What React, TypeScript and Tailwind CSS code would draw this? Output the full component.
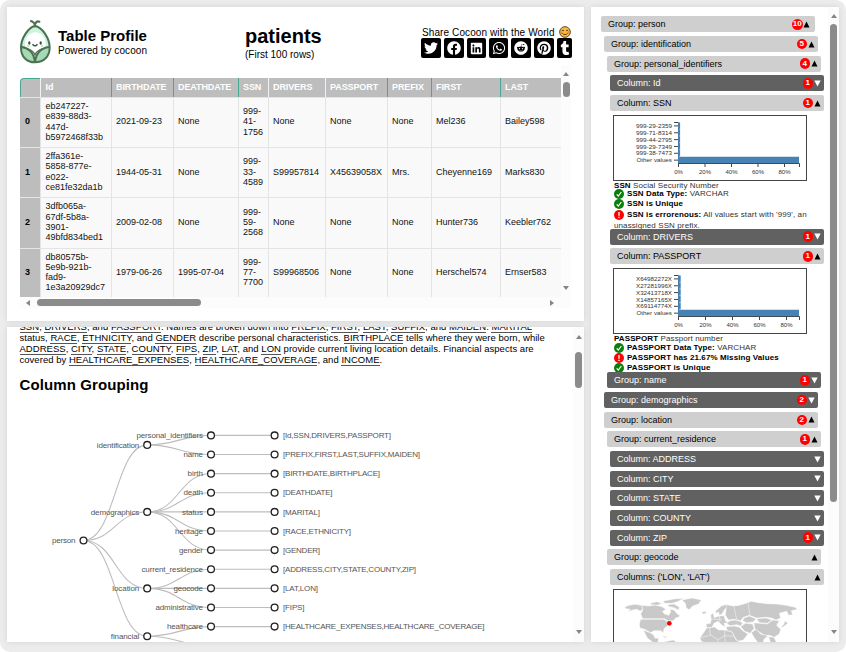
import React from "react";
import { FaTwitter, FaFacebook, FaLinkedin, FaWhatsapp, FaReddit, FaPinterest, FaTumblr } from "react-icons/fa";

function Arrow({ dir }: { dir: "up" | "down" | "left" | "right" }) {
  const d = { up: "M0 4L3 0L6 4Z", down: "M0 0L3 4L6 0Z", left: "M4 0L0 3L4 6Z", right: "M0 0L4 3L0 6Z" }[dir];
  const flat = dir === "up" || dir === "down";
  return (
    <svg width={flat ? 6 : 4} height={flat ? 4 : 6} className="shrink-0">
      <path d={d} fill="#858585" />
    </svg>
  );
}

function Logo() {
  const egg = "M45 21C26 24 3 57 3 86C3 112 19 130 45 130C71 130 89 112 89 86C89 57 66 24 45 21Z";
  return (
    <svg width="32" height="46" viewBox="0 0 96 138" className="shrink-0">
      <defs>
        <clipPath id="egg">
          <path d={egg} />
        </clipPath>
      </defs>
      <path d={egg} fill="#cdf3dc" />
      <ellipse cx="46" cy="76" rx="31" ry="36" fill="#fff" />
      <g clipPath="url(#egg)" stroke="#4e7052" strokeWidth="6" fill="#a4dab6">
        <path d="M-4 84C20 82 44 98 45 134H-4Z" />
        <path d="M96 84C70 82 46 98 45 134H96Z" />
        <path d="M22 89C32 92 42 100 45 108C48 100 58 92 68 89" fill="none" strokeWidth="4" />
      </g>
      <path d={egg} fill="none" stroke="#4e7052" strokeWidth="6" />
      <path d="M45 22C45 14 42 9 33 6M45 16C48 9 52 5 58 8" fill="none" stroke="#4e7052" strokeWidth="6.5" strokeLinecap="round" />
      <ellipse cx="28" cy="72" rx="3.5" ry="5" fill="#35513b" />
      <ellipse cx="62" cy="72" rx="3.5" ry="5" fill="#35513b" />
      <path d="M39 77Q45 84 51 77" fill="none" stroke="#35513b" strokeWidth="4.5" strokeLinecap="round" />
      <circle cx="25" cy="81" r="3.5" fill="#b5e8b0" />
      <circle cx="66" cy="81" r="3.5" fill="#b5e8b0" />
    </svg>
  );
}

function Smile() {
  return (
    <svg width="12" height="12" viewBox="0 0 36 36">
      <circle cx="18" cy="18" r="16" fill="#fdb93a" stroke="#5a4630" strokeWidth="3" />
      <path d="M8 15Q12 10 15 15M21 15Q24 10 28 15M9 21Q18 31 27 21" fill="none" stroke="#3b3026" strokeWidth="2.6" />
      <circle cx="8" cy="21" r="3" fill="#f8893c" />
      <circle cx="28" cy="21" r="3" fill="#f8893c" />
    </svg>
  );
}

const headers = ["", "Id", "BIRTHDATE", "DEATHDATE", "SSN", "DRIVERS", "PASSPORT", "PREFIX", "FIRST", "LAST"];
const tealEdge = [true, false, true, true, true, false, false, true, true, true];
const rows = [
  ["0", "eb247227-\ne839-88d3-\n447d-\nb5972468f33b", "2021-09-23", "None", "999-\n41-\n1756", "None", "None", "None", "Mel236", "Bailey598"],
  ["1", "2ffa361e-\n5858-877e-\ne022-\nce81fe32da1b", "1944-05-31", "None", "999-\n33-\n4589", "S99957814", "X45639058X", "Mrs.", "Cheyenne169", "Marks830"],
  ["2", "3dfb065a-\n67df-5b8a-\n3901-\n49bfd834bed1", "2009-02-08", "None", "999-\n59-\n2568", "None", "None", "None", "Hunter736", "Keebler762"],
  ["3", "db80575b-\n5e9b-921b-\nfad9-\n1e3a20929dc7", "1979-06-26", "1995-07-04", "999-\n77-\n7700", "S99968506", "None", "None", "Herschel574", "Ernser583"],
];
const colGrid = "grid grid-cols-[20px_70.5px_62px_65px_30px_57px_62px_44px_69px_61.5px]";

function DataTable() {
  return (
    <div className="flex h-[243px] w-[551px] flex-col">
      <div className="flex h-[232px]">
        <div className="w-[541px] overflow-hidden pt-[13px]">
          <div className={colGrid + " h-[19px] overflow-hidden rounded-tl-[4px] bg-[#bdbdbd]"}>
            {headers.map((h, i) => (
              <div
                key={i}
                className={
                  "flex items-center border-l pl-[4.5px] text-[9px] font-bold tracking-[-0.1px] text-white " +
                  (i === 0 ? "rounded-tl-[4px] border-t border-[#46a793]" : tealEdge[i] ? "border-[#46a793]" : "border-[#f2f2f2]")
                }
              >
                {h}
              </div>
            ))}
          </div>
          {rows.map((r) => (
            <div key={r[0]} className={colGrid + " h-[50.2px] border-t border-[#e4e4e4] bg-[#f9f9f9]"}>
              {r.map((c, i) =>
                i === 0 ? (
                  <div key={i} className="flex items-center bg-[#bdbdbd] pb-[1px] pl-[5px] text-[9px] font-bold">
                    {c}
                  </div>
                ) : (
                  <div
                    key={i}
                    className="flex items-center whitespace-pre border-l border-[#e4e4e4] pb-[2px] pl-[4.5px] text-[9px] leading-[10.3px] text-[#111]"
                  >
                    {c}
                  </div>
                )
              )}
            </div>
          ))}
        </div>
        <div className="flex w-[10px] flex-col items-center bg-[#fcfcfc] pb-[7px] pt-[7px]">
          <Arrow dir="up" />
          <div className="mt-[6px] h-[15px] w-[7px] rounded-full bg-[#8b8b8b]" />
          <div className="flex-1" />
          <Arrow dir="down" />
        </div>
      </div>
      <div className="flex h-[11px] items-center bg-[#fcfcfc] pl-[6px] pr-[17px]">
        <Arrow dir="left" />
        <div className="ml-[7px] h-[7px] w-[164px] rounded-full bg-[#8b8b8b]" />
        <div className="flex-1" />
        <Arrow dir="right" />
      </div>
    </div>
  );
}

const socials = [
  { I: FaTwitter, w: "w-[20px]", s: 14 },
  { I: FaFacebook, w: "w-[20px]", s: 14 },
  { I: FaLinkedin, w: "w-[19px]", s: 13 },
  { I: FaWhatsapp, w: "w-[19px]", s: 14 },
  { I: FaReddit, w: "w-[20px]", s: 14 },
  { I: FaPinterest, w: "w-[20px]", s: 14 },
  { I: FaTumblr, w: "w-[15px]", s: 14 },
];

function TopPanel() {
  return (
    <section className="h-[314px] bg-white pl-[13px] shadow-[0_0_6px_rgba(0,0,0,0.1)]">
      <div className="flex h-[58px] items-start">
        <div className="mt-[12px]">
          <Logo />
        </div>
        <div className="ml-[6px] mt-[20px] w-[187px]">
          <div className="text-[15px] font-bold leading-[18px]">Table Profile</div>
          <div className="text-[10px] leading-[12px] tracking-[0.07px]">Powered by cocoon</div>
        </div>
        <div className="mt-[17px] w-[176px]">
          <div className="text-[20px] font-bold leading-[25px]">patients</div>
          <div className="text-[10px] leading-[12px]">(First 100 rows)</div>
        </div>
        <div className="mt-[19px] w-[151px]">
          <div className="flex h-[12px] items-center gap-[4px] pl-[1px] text-[10px] tracking-[0.1px]">
            <span className="whitespace-nowrap">Share Cocoon with the World</span>
            <Smile />
          </div>
          <div className="flex justify-between">
            {socials.map(({ I, w, s }, i) => (
              <div key={i} className={w + " flex h-[20px] items-center justify-center rounded-[2px] bg-black text-white"}>
                <I size={s} />
              </div>
            ))}
          </div>
        </div>
      </div>
      <DataTable />
    </section>
  );
}

const nodeRows = [
  ["personal_identifiers", "[Id,SSN,DRIVERS,PASSPORT]", 66.5, 108],
  ["name", "[PREFIX,FIRST,LAST,SUFFIX,MAIDEN]", 19.5, 137],
  ["birth", "[BIRTHDATE,BIRTHPLACE]", 15.5, 97],
  ["death", "[DEATHDATE]", 19.5, 49.5],
  ["status", "[MARITAL]", 21, 37],
  ["heritage", "[RACE,ETHNICITY]", 28, 68],
  ["gender", "[GENDER]", 24, 37],
  ["current_residence", "[ADDRESS,CITY,STATE,COUNTY,ZIP]", 61.5, 133],
  ["geocode", "[LAT,LON]", 29.5, 35],
  ["administrative", "[FIPS]", 47.5, 21.5],
  ["healthcare", "[HEALTHCARE_EXPENSES,HEALTHCARE_COVERAGE]", 36, 201.5],
] as [string, string, number, number][];
const rowY = (i: number) => 435.4 + 19.12 * i;
const parents = [
  { n: "identification", y: 444.9, c: [0, 1], w: 42.5 },
  { n: "demographics", y: 511.9, c: [2, 3, 4, 5, 6], w: 48.5 },
  { n: "location", y: 588.4, c: [7, 8, 9], w: 27 },
  { n: "financial", y: 636.2, c: [10, 11], w: 28.5 },
];
const link = (x1: number, y1: number, x2: number, y2: number) =>
  `M${x1} ${y1}C${(x1 + x2) / 2} ${y1} ${(x1 + x2) / 2} ${y2} ${x2} ${y2}`;

function Tree() {
  return (
    <svg width="566" height="240" viewBox="7 402 566 240" className="block" fontSize="8" fill="#555">
      <g fill="none" stroke="#bdbdbd" strokeWidth="1.1">
        {parents.map((p) => (
          <path key={p.n} d={link(83.5, 540.5, 147.2, p.y)} />
        ))}
        {parents.flatMap((p) => p.c.map((c) => <path key={p.n + c} d={link(147.2, p.y, 211, rowY(c))} />))}
        {nodeRows.map((r, i) => (
          <path key={r[0]} d={`M211 ${rowY(i)}H274.6`} />
        ))}
      </g>
      <g fill="#fff" stroke="#222" strokeWidth="1.3">
        <circle cx="83.5" cy="540.5" r="3.4" />
        {parents.map((p) => (
          <circle key={p.n} cx="147.2" cy={p.y} r="3.4" />
        ))}
        {nodeRows.map((r, i) => (
          <React.Fragment key={r[0]}>
            <circle cx="211" cy={rowY(i)} r="3.4" />
            <circle cx="274.6" cy={rowY(i)} r="3.4" />
          </React.Fragment>
        ))}
      </g>
      <text x="52" y="543.2" textLength="23.5">person</text>
      {parents.map((p) => (
        <text key={p.n} x={139.3 - p.w} y={p.y + 2.9} textLength={p.w}>
          {p.n}
        </text>
      ))}
      {nodeRows.map(([a, b, wa, wb], i) => (
        <React.Fragment key={a}>
          <text x={203 - wa} y={rowY(i) + 2.7} textLength={wa}>
            {a}
          </text>
          <text x={283} y={rowY(i) + 2.7} textLength={wb}>
            {b}
          </text>
        </React.Fragment>
      ))}
    </svg>
  );
}

function Words({ text }: { text: string }) {
  return (
    <div className="whitespace-nowrap">
      {text.split(/([A-Z_]{3,})/).map((t, i) =>
        i % 2 ? (
          <span key={i} className="border-b border-[#555]">
            {t}
          </span>
        ) : (
          t
        )
      )}
    </div>
  );
}

function BottomPanel() {
  return (
    <section className="flex h-[315px] overflow-hidden bg-white shadow-[0_0_6px_rgba(0,0,0,0.1)]">
      <div className="h-[315px] w-[566px] overflow-hidden">
        <div className="-mt-[6px] ml-[12.5px] text-[9.5px] leading-[11px] tracking-[0.03px]">
          <Words text="SSN, DRIVERS, and PASSPORT. Names are broken down into PREFIX, FIRST, LAST, SUFFIX, and MAIDEN. MARITAL" />
          <Words text="status, RACE, ETHNICITY, and GENDER describe personal characteristics. BIRTHPLACE tells where they were born, while" />
          <Words text="ADDRESS, CITY, STATE, COUNTY, FIPS, ZIP, LAT, and LON provide current living location details. Financial aspects are" />
          <Words text="covered by HEALTHCARE_EXPENSES, HEALTHCARE_COVERAGE, and INCOME." />
        </div>
        <h2 className="ml-[12.5px] mt-[10px] h-[27px] text-[15px] font-bold leading-[20px] tracking-[0.1px]">Column Grouping</h2>
        <Tree />
      </div>
      <div className="flex w-[11px] flex-col items-center bg-[#fcfcfc] pb-[8px] pt-[8px]">
        <Arrow dir="up" />
        <div className="mt-[13px] h-[36px] w-[7px] rounded-full bg-[#8b8b8b]" />
        <div className="flex-1" />
        <Arrow dir="down" />
      </div>
    </section>
  );
}

function Bar({ label, lvl, n, open }: { label: string; lvl: 0 | 1 | 2 | 3; n?: number; open?: boolean }) {
  const indent = ["ml-[10px]", "ml-[13px]", "ml-[16px]", "ml-[19px]"][lvl];
  return (
    <div
      className={
        indent +
        " mb-[3.66px] flex h-[16px] w-[214px] shrink-0 items-center rounded-[2px] pl-[7px] text-[9px] leading-[12px] " +
        (lvl === 0 ? "pr-[5px] " : "pr-[3.5px] ") +
        (open ? "bg-[#cfcfcf] text-black" : "bg-[#616161] text-white")
      }
    >
      <span className="flex-1 whitespace-nowrap">{label}</span>
      {n !== undefined && (
        <span className="mr-[0.5px] flex h-[10.5px] w-[10.5px] items-center justify-center rounded-full bg-[#f00] text-[8px] leading-none font-bold text-white">
          {n}
        </span>
      )}
      <svg width="7" height="7" viewBox="0 0 7 7">
        <path d={open ? "M3.5 0.5L6.5 6.5H0.5Z" : "M0.3 0.5H6.7L3.5 6.5Z"} fill="currentColor" />
      </svg>
    </div>
  );
}

function Chart({ labels, step, small }: { labels: string[]; step: number; small: number }) {
  return (
    <div className="ml-[22px] h-[66px] w-[194px] shrink-0 border border-[#444] bg-white">
      <svg width="192" height="64" viewBox="614 116 192 64" fontSize="6" fill="#333">
        {labels.map((l, i) => (
          <text key={l} x={l[0] === "O" ? 636.5 : 636} y={128 + i * 6.85} textLength={l[0] === "O" ? 35.5 : 36} lengthAdjust="spacingAndGlyphs">
            {l}
          </text>
        ))}
        <g stroke="#444" strokeWidth="1">
          <path d="M678.5 122.5V163.5M674 122.5H678M678 163.5H799.5V167M678.5 163.5V167" fill="none" />
          {labels.map((l, i) => (
            <path key={l} d={`M674 ${125.9 + i * 6.85}H678`} />
          ))}
          {[1, 2, 3, 4].map((i) => (
            <path key={i} d={`M${678.5 + i * step} 163.5V167`} />
          ))}
        </g>
        <g fill="#4682b4">
          {labels.map((l, i) => (
            <rect key={l} x="678" y={122.5 + i * 6.85} width={i === 5 ? 121 : small + 0.3} height="6.4" />
          ))}
        </g>
        {[0, 1, 2, 3, 4].map((i) => (
          <text key={i} x={678.5 + i * step} y="174" textAnchor="middle">
            {i * 20}%
          </text>
        ))}
      </svg>
    </div>
  );
}

function Check() {
  return (
    <svg width="10" height="10" viewBox="0 0 30 30" className="mr-[3px] shrink-0">
      <circle cx="15" cy="15" r="15" fill="#088008" />
      <path d="M8 16L13 21L22 9" fill="none" stroke="#fff" strokeWidth="3.5" />
    </svg>
  );
}
function Warn() {
  return (
    <svg width="10" height="10" viewBox="0 0 30 30" className="mr-[3px] shrink-0">
      <circle cx="15" cy="15" r="15" fill="#f00" />
      <path d="M15 6V17M15 20V24" fill="none" stroke="#fff" strokeWidth="4" />
    </svg>
  );
}

function WorldMap() {
  return (
    <div className="ml-[22px] h-[66px] w-[194px] shrink-0 border border-[#444] bg-white">
      <svg width="192" height="64" viewBox="72 150 576 192" fill="#c9c9c9" stroke="#fff" strokeWidth="1.4">
        <path d="M104 201L118 196L134 193L156 196L157 209L150 213L140 208L128 210L114 215L121 208L108 206Z" />
        <path d="M156 196L176 198L196 195L216 200L228 208L218 214L222 221L236 226L242 216L240 208L252 210L262 222L271 228L256 235L250 242L234 243L224 236L158 236L152 222L158 211Z" />
        <path d="M180 190L200 185L216 190L204 195L186 194ZM220 183L252 177L282 175L262 185L246 190L224 190ZM232 194L252 192L268 202L266 210L252 203L238 200Z" />
        <path d="M276 180L306 174L334 180L326 192L308 198L298 209L289 204L286 190Z" />
        <path d="M152 238L222 238L232 245L240 241L234 256L222 266L220 278L212 272L192 272L182 278L164 268L150 264L148 252Z" />
        <path d="M160 270L180 278L190 284L196 295L206 294L204 306L216 316L190 308L172 294ZM214 287L232 291L226 294ZM220 306L250 300L280 320L240 342Z" />
        <path d="M334 217L346 214L350 220L340 222ZM362 224L370 220L374 238L364 241Z" />
        <path d="M376 214L394 198L410 193L414 204L404 208L396 222L388 226L386 216L378 220Z" />
        <path d="M376 232L388 228L402 227L406 242L416 248L402 250L406 260L396 256L384 244L372 250L366 262L350 263L348 252L362 250L362 242Z" />
        <path d="M410 194L430 198L448 196L468 190L484 184L506 188L530 191L560 192L588 196L616 202L622 208L604 212L608 224L596 226L590 214L568 220L572 234L558 240L544 234L528 232L500 234L478 226L460 232L452 242L432 238L416 240L406 226Z" />
        <path d="M418 243L434 240L450 244L458 250L452 258L440 254L422 257L410 252Z" />
        <path d="M462 234L478 228L498 236L490 246L470 248L458 242Z" />
        <path d="M500 236L528 234L546 240L532 250L508 248Z" />
        <path d="M492 248L508 250L532 252L548 240L568 242L560 256L572 268L568 282L552 292L540 286L524 286L508 276L494 266Z" />
        <path d="M408 260L434 258L448 262L458 272L474 282L460 300L442 304L426 276L412 272Z" />
        <path d="M452 260L466 250L488 252L492 266L480 280L464 274Z" />
        <path d="M484 278L498 268L512 282L534 288L522 298L516 320L502 306L492 292Z" />
        <path d="M350 264L374 261L386 270L404 270L426 276L438 300L450 308L440 342H380L360 314L334 304L330 294L342 276Z" />
        <path d="M536 290L552 292L560 308L548 318L540 304ZM584 242L594 250L580 260L570 264L582 252Z" />
        <path d="M358 264L362 285L334 293M362 285L384 299L404 287L404 270M404 287L430 289M384 299L380 340M404 287L408 320M432 200L440 238M474 190L480 226M372 238L396 238M388 228L390 246" fill="none" />
        <circle cx="238" cy="250" r="7" fill="#f00" stroke="none" />
      </svg>
    </div>
  );
}

const note = "flex h-[10.2px] items-center whitespace-nowrap";

function RightPanel() {
  return (
    <section className="flex h-[635px] w-[248px] overflow-hidden bg-white shadow-[0_0_6px_rgba(0,0,0,0.1)]">
      <div className="flex w-[237px] flex-col pt-[9.4px]">
        <Bar lvl={0} label="Group: person" n={10} open />
        <Bar lvl={1} label="Group: identification" n={5} open />
        <Bar lvl={2} label="Group: personal_identifiers" n={4} open />
        <Bar lvl={3} label="Column: Id" n={1} />
        <Bar lvl={3} label="Column: SSN" n={1} open />
        <div className="h-[114px] shrink-0">
          <Chart labels={["999-29-2359", "999-71-8314", "999-44-2795", "999-29-7349", "999-38-7473", "Other values"]} step={26.5} small={1.8} />
          <div className="ml-[23px] text-[8px] tracking-[0.1px] text-[#333]">
            <div className="h-[8.5px] leading-[9px]"><b className="text-black">SSN</b> Social Security Number</div>
            <div className={note}><Check /><span><b className="text-black">SSN Data Type:</b> VARCHAR</span></div>
            <div className={note}><Check /><b className="text-black">SSN is Unique</b></div>
            <div className={note}><Warn /><span><b className="text-black">SSN is errorenous:</b> All values start with '999', an</span></div>
            <div className="h-[11px] leading-[12px]">unassigned SSN prefix.</div>
          </div>
        </div>
        <Bar lvl={3} label="Column: DRIVERS" n={1} />
        <Bar lvl={3} label="Column: PASSPORT" n={1} open />
        <div className="h-[104.5px] shrink-0">
          <Chart labels={["X64982272X", "X27281996X", "X32413718X", "X14857165X", "X69114774X", "Other values"]} step={27} small={2.4} />
          <div className="ml-[23px] text-[8px] tracking-[0.1px] text-[#333]">
            <div className="h-[8.5px] leading-[9px]"><b className="text-black">PASSPORT</b> Passport number</div>
            <div className={note}><Check /><span><b className="text-black">PASSPORT Data Type:</b> VARCHAR</span></div>
            <div className={note}><Warn /><b className="text-black">PASSPORT has 21.67% Missing Values</b></div>
            <div className={note}><Check /><b className="text-black">PASSPORT is Unique</b></div>
          </div>
        </div>
        <Bar lvl={2} label="Group: name" n={1} />
        <Bar lvl={1} label="Group: demographics" n={2} />
        <Bar lvl={1} label="Group: location" n={2} open />
        <Bar lvl={2} label="Group: current_residence" n={1} open />
        <Bar lvl={3} label="Column: ADDRESS" />
        <Bar lvl={3} label="Column: CITY" />
        <Bar lvl={3} label="Column: STATE" />
        <Bar lvl={3} label="Column: COUNTY" />
        <Bar lvl={3} label="Column: ZIP" n={1} />
        <Bar lvl={2} label="Group: geocode" open />
        <Bar lvl={3} label="Columns: ('LON', 'LAT')" open />
        <WorldMap />
      </div>
      <div className="flex w-[11px] flex-col items-center bg-[#fcfcfc] pb-[8px] pt-[7px]">
        <Arrow dir="up" />
        <div className="mt-[6px] h-[478px] w-[7px] rounded-full bg-[#8b8b8b]" />
        <div className="flex-1" />
        <Arrow dir="down" />
      </div>
    </section>
  );
}

export default function App() {
  return (
    <div className="h-[652px] w-[846px] overflow-hidden bg-white font-['Liberation_Sans',Arial,sans-serif] text-black">
      <div className="flex h-[652px] w-[846px] gap-[7px] rounded-[10px] bg-[#ececec] pl-[7px] pt-[7px]">
        <div className="flex w-[577px] flex-col gap-[6px]">
          <TopPanel />
          <BottomPanel />
        </div>
        <RightPanel />
      </div>
    </div>
  );
}
